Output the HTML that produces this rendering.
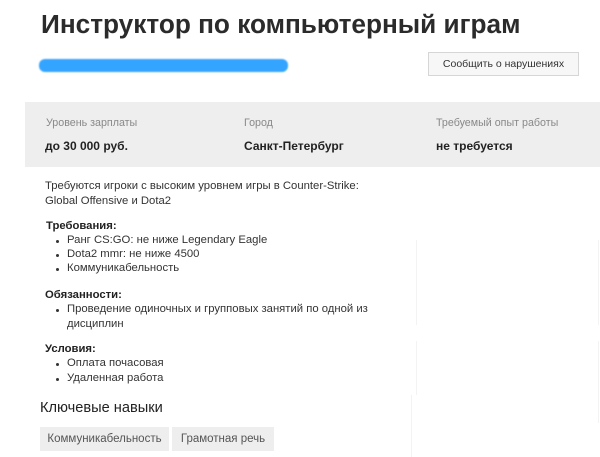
<!DOCTYPE html>
<html><head><meta charset="utf-8"><style>
*{margin:0;padding:0;box-sizing:border-box}
body{width:600px;height:457px;background:#fff;font-family:"Liberation Sans",Arial,sans-serif;color:#333;position:relative;overflow:hidden}
.a{position:absolute;white-space:nowrap}
h1{position:absolute;left:41px;top:9px;font-size:26.2px;font-weight:bold;color:#2b2b2b;white-space:nowrap}
.blue{position:absolute;left:39px;top:59px;width:249px;height:13px;background:#1e9bff;border-radius:6px;filter:blur(0.7px);opacity:.9}
.btn{position:absolute;left:428px;top:52px;width:151px;height:24px;border:1px solid #d6d6d6;background:#f7f7f7;font-size:10.5px;text-align:center;line-height:22px;color:#333}
.band{position:absolute;left:25px;top:102px;width:575px;height:65px;background:#eee}
.lab{font-size:10.7px;color:#888;top:117px}
.val{font-size:12px;font-weight:bold;color:#222;top:139px}
.t{font-size:11.3px;color:#333;line-height:14.5px}
.b{font-weight:bold;color:#222}
.li{position:absolute;left:67px;font-size:11.3px;line-height:14.5px;color:#333;white-space:nowrap}
.li:before{content:"";position:absolute;left:-11px;top:7px;width:3px;height:3px;border-radius:50%;background:#333}
.tag{position:absolute;top:427px;height:24px;background:#eee;font-size:11.5px;color:#555;line-height:24px;text-align:center}
.ln{position:absolute;background:#f3f3f3}
</style></head><body>
<h1>Инструктор по компьютерный играм</h1>
<div class="blue"></div>
<div class="btn">Сообщить о нарушениях</div>
<div class="band"></div>
<div class="a lab" style="left:46px">Уровень зарплаты</div>
<div class="a lab" style="left:244px">Город</div>
<div class="a lab" style="left:436px">Требуемый опыт работы</div>
<div class="a val" style="left:45px">до 30 000 руб.</div>
<div class="a val" style="left:244px">Санкт-Петербург</div>
<div class="a val" style="left:436px">не требуется</div>

<div class="a t" style="left:45px;top:179px">Требуются игроки с высоким уровнем игры в Counter-Strike:<br>Global Offensive и Dota2</div>
<div class="a t b" style="left:46px;top:219px">Требования:</div>
<div class="li" style="top:233px">Ранг CS:GO: не ниже Legendary Eagle</div>
<div class="li" style="top:247px">Dota2 mmr: не ниже 4500</div>
<div class="li" style="top:261px">Коммуникабельность</div>
<div class="a t b" style="left:45px;top:288px">Обязанности:</div>
<div class="li" style="top:302px">Проведение одиночных и групповых занятий по одной из<br>дисциплин</div>
<div class="a t b" style="left:45px;top:342px">Условия:</div>
<div class="li" style="top:356px">Оплата почасовая</div>
<div class="li" style="top:371px">Удаленная работа</div>
<div class="a" style="left:40px;top:400px;font-size:14.6px;color:#222">Ключевые навыки</div>
<div class="tag" style="left:40px;width:129px">Коммуникабельность</div>
<div class="tag" style="left:172px;width:102px">Грамотная речь</div>

<div class="ln" style="left:416px;top:240px;width:1px;height:85px"></div>
<div class="ln" style="left:598px;top:240px;width:1px;height:85px"></div>
<div class="ln" style="left:416px;top:341px;width:1px;height:54px"></div>
<div class="ln" style="left:598px;top:341px;width:1px;height:82px"></div>
<div class="ln" style="left:411px;top:395px;width:1px;height:62px"></div>
</body></html>
